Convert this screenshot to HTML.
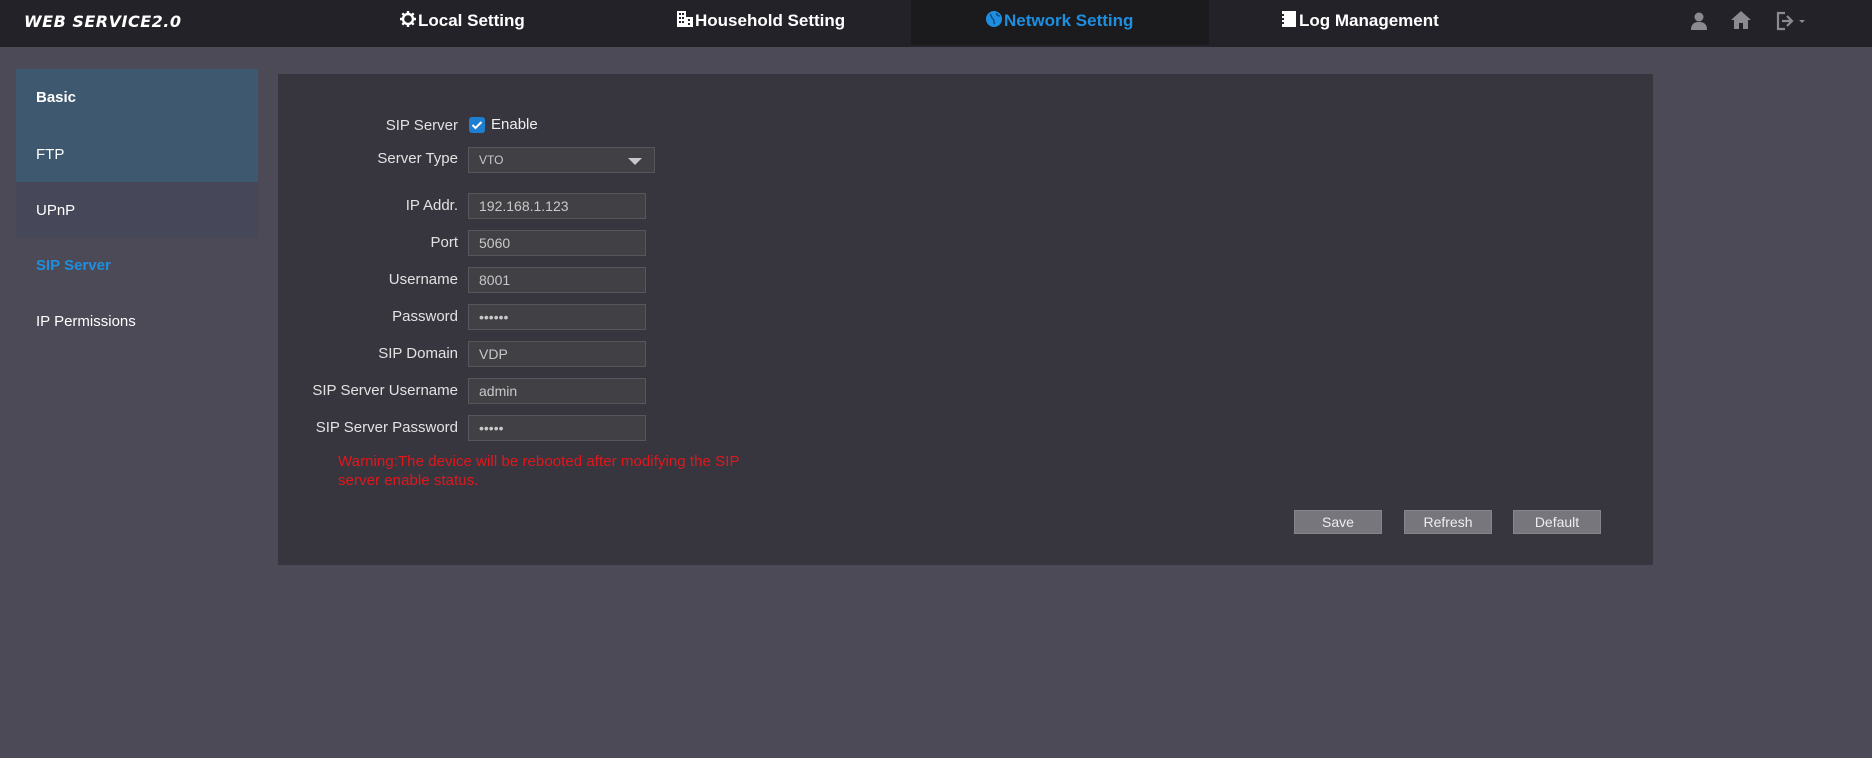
<!DOCTYPE html>
<html><head><meta charset="utf-8"><style>
*{margin:0;padding:0;box-sizing:border-box}
body{width:1872px;height:758px;background:#4c4a56;font-family:"Liberation Sans",sans-serif;position:relative;overflow:hidden}
.hdr{position:absolute;left:0;top:0;width:1872px;height:47px;background:#222228}
.act{position:absolute;left:911px;top:0;width:298px;height:45px;background:#1b1b1e}
.logo{position:absolute;left:24px;top:12px;color:#fff;font:italic bold 16px "DejaVu Sans",sans-serif;letter-spacing:0.5px}
.nav{position:absolute;top:10px;color:#fff;font-weight:bold;font-size:17px;white-space:nowrap}
.nav svg{vertical-align:-2px;margin-right:1px}
.side{position:absolute;left:16px;width:242px;height:56px;color:#fff;font-size:15px;padding-left:20px;line-height:58px}
.panel{position:absolute;left:278px;top:74px;width:1375px;height:491px;background:#37363f}
.lbl{position:absolute;right:1414px;color:#e2e2e2;font-size:15px;white-space:nowrap;margin-top:2px}
.inp{position:absolute;left:468px;width:178px;height:26px;background:#414145;border:1px solid #56565b;color:#c8c8c8;font-size:14px;padding-left:10px;line-height:24px}
.warn{position:absolute;left:338px;top:452px;color:#e3161b;font-size:15px;line-height:19px;width:420px;letter-spacing:0.06px}
.btn{position:absolute;top:510px;width:88px;height:24px;background:#77767c;border:1px solid #85848a;color:#eee;font-size:14px;text-align:center;line-height:22px}
</style></head><body>
<div class="hdr"></div><div class="act"></div>
<div class="logo">WEB SERVICE2.0</div>
<div class="nav" style="left:399px"><svg width="18" height="18" viewBox="0 0 18 18"><circle cx="9" cy="9" r="5" fill="none" stroke="#fff" stroke-width="2.4"/><g stroke="#fff" stroke-width="2.4"><path d="M9 1v3M9 14v3M1 9h3M14 9h3M3.3 3.3l2.1 2.1M12.6 12.6l2.1 2.1M3.3 14.7l2.1-2.1M12.6 5.4l2.1-2.1"/></g></svg>Local Setting</div>
<div class="nav" style="left:676px"><svg width="18" height="18" viewBox="0 0 18 18"><rect x="1" y="1" width="9" height="16" fill="#fff"/><rect x="10" y="7" width="7" height="10" fill="#fff"/><g fill="#222228"><rect x="3" y="3" width="2" height="2"/><rect x="6" y="3" width="2" height="2"/><rect x="3" y="7" width="2" height="2"/><rect x="6" y="7" width="2" height="2"/><rect x="3" y="11" width="2" height="2"/><rect x="6" y="11" width="2" height="2"/><rect x="12" y="9" width="2" height="2"/><rect x="12" y="13" width="2" height="2"/></g></svg>Household Setting</div>
<div class="nav" style="left:985px;color:#1e8fe0"><svg width="18" height="18" viewBox="0 0 18 18"><circle cx="9" cy="9" r="8" fill="#1e8fe0"/><path d="M5 4c2 2 1 4 3 5s0 4 2 5M12 3c-1 2 1 3 3 3" stroke="#0a4f88" stroke-width="1.5" fill="none"/></svg>Network Setting</div>
<div class="nav" style="left:1280px"><svg width="18" height="18" viewBox="0 0 18 18"><rect x="2" y="1" width="14" height="16" fill="#fff"/><g fill="#222228"><rect x="2" y="4" width="2" height="2"/><rect x="2" y="8" width="2" height="2"/><rect x="2" y="12" width="2" height="2"/></g></svg>Log Management</div>
<svg style="position:absolute;left:1690px;top:11px" width="18" height="20" viewBox="0 0 18 20"><circle cx="9" cy="6" r="4.5" fill="#8a8a90"/><path d="M1 19c0-6 3-8 8-8s8 2 8 8z" fill="#8a8a90"/></svg>
<svg style="position:absolute;left:1730px;top:10px" width="22" height="20" viewBox="0 0 22 20"><path d="M11 1L1 10h3v9h5v-6h4v6h5v-9h3z" fill="#8a8a90"/></svg>
<svg style="position:absolute;left:1776px;top:11px" width="34" height="20" viewBox="0 0 34 20"><path d="M9 2H2v16h7" stroke="#8a8a90" stroke-width="2.2" fill="none"/><path d="M6 10h9M11 5l5 5-5 5" stroke="#8a8a90" stroke-width="2.2" fill="none"/><path d="M23 9l3 3 3-3z" fill="#8a8a90"/></svg>

<div class="side" style="top:69px;background:#3e5870;font-weight:bold;height:57px">Basic</div>
<div class="side" style="top:126px;background:#3e5870">FTP</div>
<div class="side" style="top:182px;background:#47475a">UPnP</div>
<div class="side" style="top:237px;color:#1e8fe0;font-weight:bold">SIP Server</div>
<div class="side" style="top:293px">IP Permissions</div>

<div class="panel"></div>
<div class="lbl" style="top:115px">SIP Server</div>
<div style="position:absolute;left:469px;top:117px;width:16px;height:16px;background:#1e7fd0;border-radius:3px"><svg width="16" height="16" viewBox="0 0 16 16"><path d="M3.5 8l3 3 6-6" stroke="#fff" stroke-width="2" fill="none"/></svg></div>
<div style="position:absolute;left:491px;top:116px;color:#eee;font-size:15px">Enable</div>
<div class="lbl" style="top:148px">Server Type</div>
<div class="inp" style="top:147px;width:187px;font-size:12px;line-height:25px">VTO<svg style="position:absolute;right:12px;top:10px" width="14" height="7" viewBox="0 0 14 7"><path d="M0 0h14L7 7z" fill="#c8c8c8"/></svg></div>
<div class="lbl" style="top:195px">IP Addr.</div><div class="inp" style="top:193px">192.168.1.123</div>
<div class="lbl" style="top:232px">Port</div><div class="inp" style="top:230px">5060</div>
<div class="lbl" style="top:269px">Username</div><div class="inp" style="top:267px">8001</div>
<div class="lbl" style="top:306px">Password</div><div class="inp" style="top:304px">••••••</div>
<div class="lbl" style="top:343px">SIP Domain</div><div class="inp" style="top:341px">VDP</div>
<div class="lbl" style="top:380px">SIP Server Username</div><div class="inp" style="top:378px">admin</div>
<div class="lbl" style="top:417px">SIP Server Password</div><div class="inp" style="top:415px">•••••</div>
<div class="warn">Warning:The device will be rebooted after modifying the SIP server enable status.</div>
<div class="btn" style="left:1294px">Save</div>
<div class="btn" style="left:1404px">Refresh</div>
<div class="btn" style="left:1513px">Default</div>
</body></html>
